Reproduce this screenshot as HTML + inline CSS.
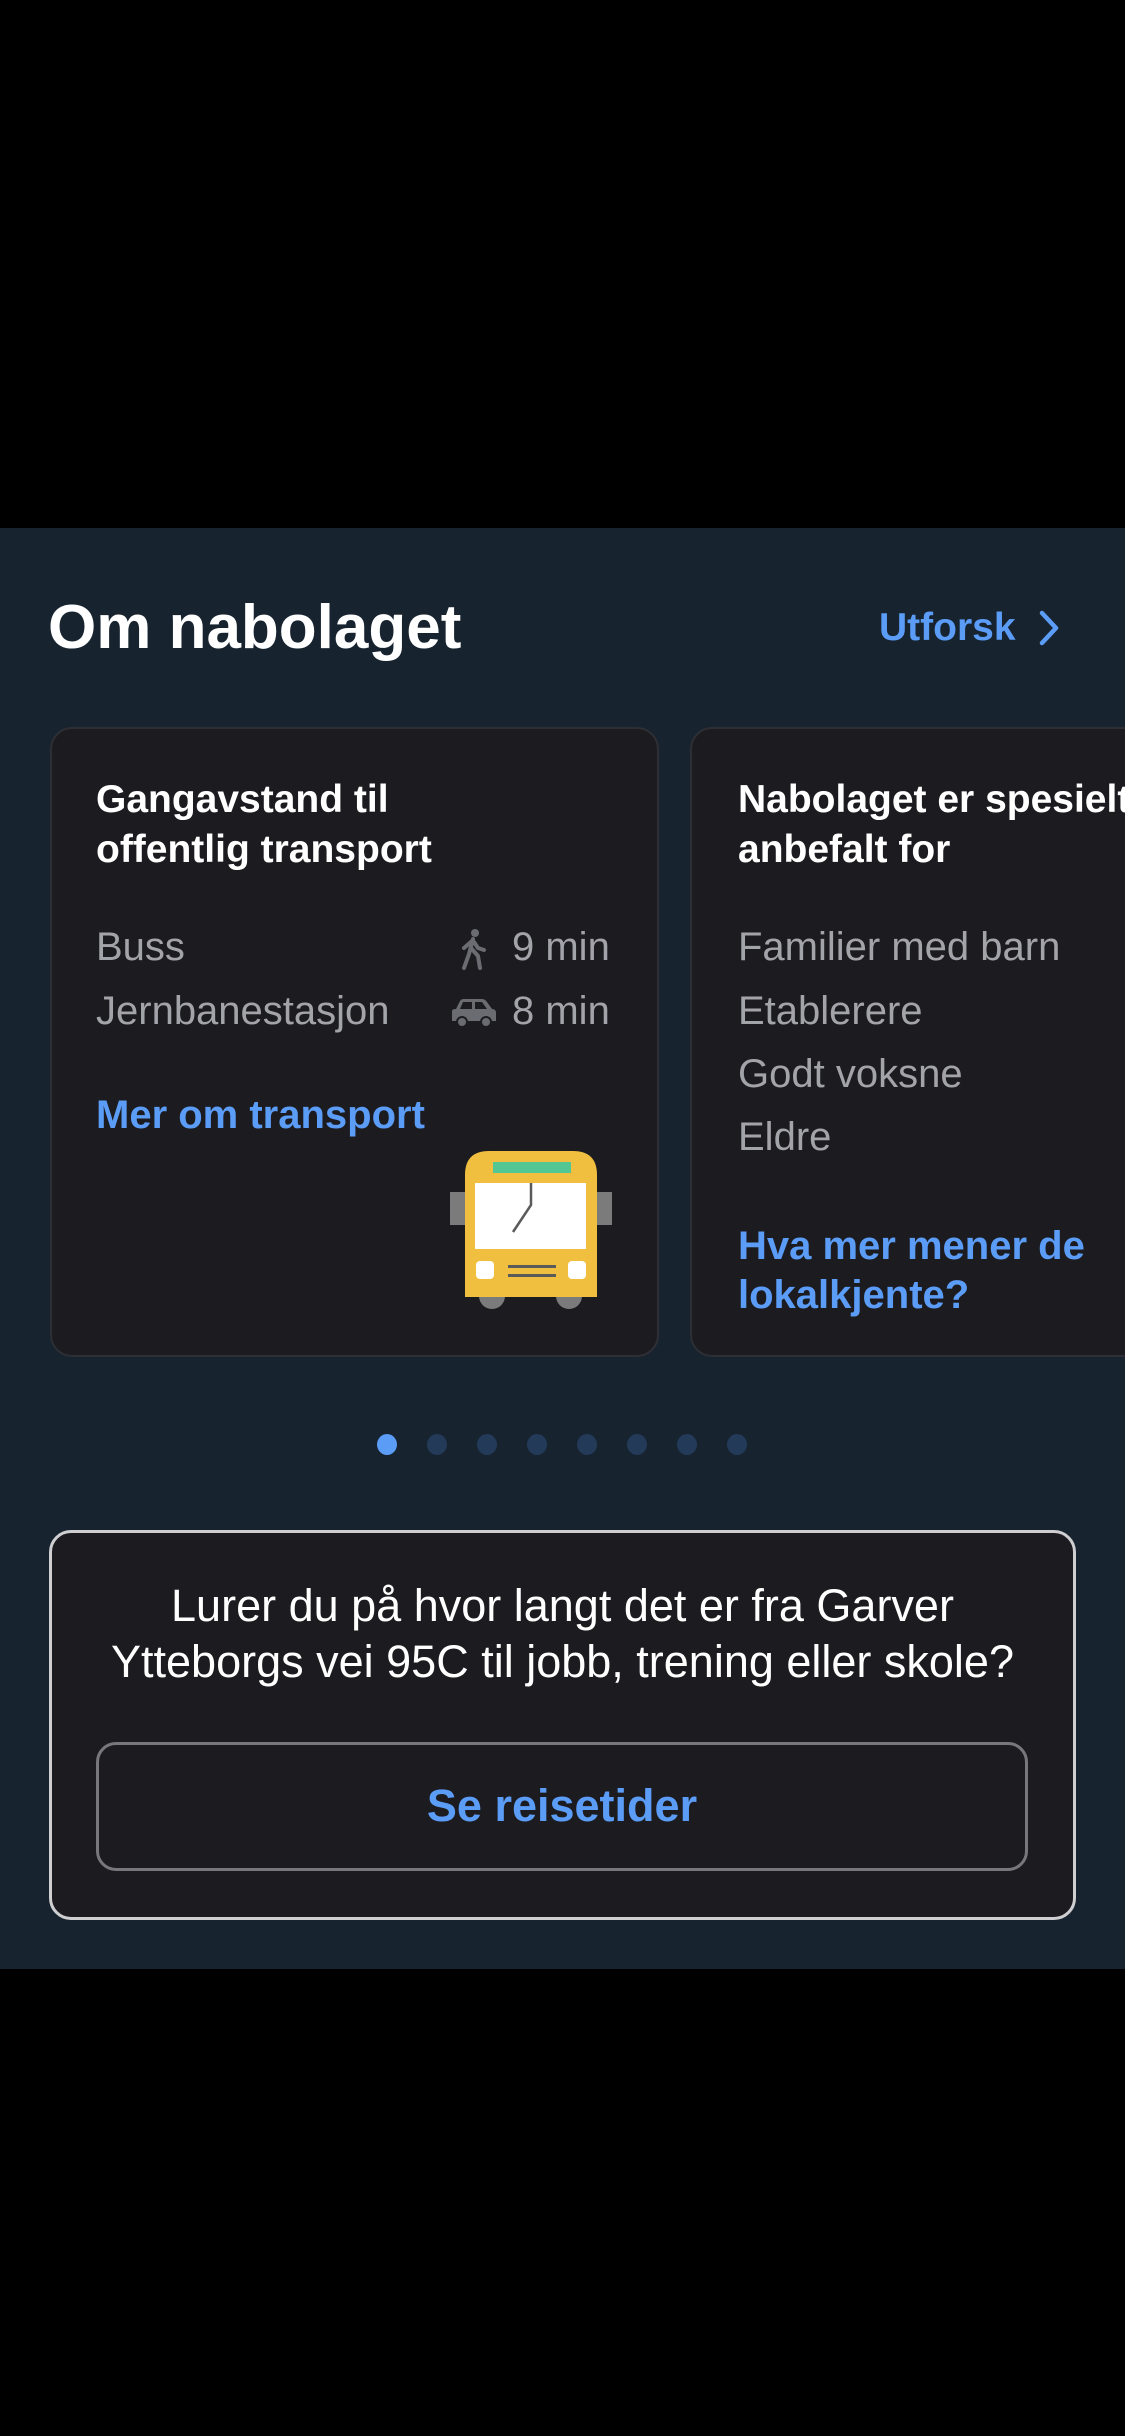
<!DOCTYPE html>
<html><head><meta charset="utf-8"><style>
*{margin:0;padding:0;box-sizing:border-box}
body{width:1125px;height:2436px;background:#000;font-family:"Liberation Sans",sans-serif;position:relative;overflow:hidden}
.sec{position:absolute;left:0;top:528px;width:1125px;height:1441px;background:#17232f}
.a{position:absolute;white-space:nowrap}
.card{position:absolute;top:727px;height:630px;background:#1c1c20;border:2px solid #2e2f34;border-radius:22px}
.t{color:#fff;font-weight:bold;font-size:39px;line-height:50px}
.g{color:#a3a3aa;font-size:40px}
.b{color:#5b9cf7;font-weight:bold}
.dot{position:absolute;top:1434px;width:20px;height:21px;border-radius:50%;background:#233a59}
</style></head><body>
<div class="sec"></div>
<div class="a" style="left:48px;top:592px;font-size:62px;font-weight:bold;color:#fff">Om nabolaget</div>
<div class="a b" style="left:879px;top:606px;font-size:39px">Utforsk</div>
<svg class="a" style="left:1036px;top:608px" width="26" height="40" viewBox="0 0 26 40"><path d="M6 5 L20 20 L6 35" fill="none" stroke="#5b9cf7" stroke-width="4.5" stroke-linecap="round" stroke-linejoin="round"/></svg>

<div class="card" style="left:50px;width:609px"></div>
<div class="a t" style="left:96px;top:775px">Gangavstand til<br>offentlig transport</div>
<div class="a g" style="left:96px;top:925px">Buss</div>
<div class="a g" style="left:96px;top:989px">Jernbanestasjon</div>
<div class="a g" style="left:512px;top:925px">9 min</div>
<div class="a g" style="left:512px;top:989px">8 min</div>
<svg class="a" style="left:458px;top:928px" width="30" height="42" viewBox="0 0 30 42"><circle cx="17" cy="5" r="4" fill="#6b6b72"/><path d="M15 11 L11 26 L6 40 M13 20 L20 28 L22 40 M14 13 L6 20 M16 14 L20 20 L26 22" fill="none" stroke="#6b6b72" stroke-width="4" stroke-linecap="round" stroke-linejoin="round"/></svg>
<svg class="a" style="left:450px;top:997px" width="48" height="32" viewBox="0 0 48 32"><path d="M2 14 Q2 12 6 12 L10 4 Q11 2 14 2 L32 2 Q35 2 37 5 L42 12 Q46 12 46 16 L46 24 L2 24 Z" fill="#6b6b72"/><path d="M13 5 L22 5 L22 12 L10 12 Z M25 5 L32 5 L37 12 L25 12 Z" fill="#1c1c20"/><circle cx="12" cy="25" r="5" fill="#6b6b72" stroke="#1c1c20" stroke-width="2"/><circle cx="36" cy="25" r="5" fill="#6b6b72" stroke="#1c1c20" stroke-width="2"/></svg>
<div class="a b" style="left:96px;top:1093px;font-size:40px">Mer om transport</div>
<svg class="a" style="left:450px;top:1150px" width="163" height="160" viewBox="450 1150 163 160">
<rect x="450" y="1192" width="16" height="33" fill="#7b7b7b"/><rect x="597" y="1192" width="15" height="33" fill="#7b7b7b"/>
<circle cx="492" cy="1296" r="13" fill="#7b7b7b"/><circle cx="569" cy="1296" r="13" fill="#7b7b7b"/>
<path d="M465 1297 L465 1175 Q465 1151 489 1151 L573 1151 Q597 1151 597 1175 L597 1297 Z" fill="#f1bf3f"/>
<rect x="493" y="1162" width="78" height="11" fill="#52c693"/>
<rect x="475" y="1183" width="111" height="66" fill="#fff"/>
<path d="M531 1183 L531 1205 L513 1232" fill="none" stroke="#5a5a5a" stroke-width="2.5"/>
<rect x="476" y="1261" width="18" height="18" rx="4" fill="#fff"/><rect x="568" y="1261" width="18" height="18" rx="4" fill="#fff"/>
<rect x="508" y="1265" width="48" height="3" fill="#5a5a5a"/><rect x="508" y="1274" width="48" height="3" fill="#5a5a5a"/>
</svg>

<div class="card" style="left:690px;width:600px"></div>
<div class="a t" style="left:738px;top:775px">Nabolaget er spesielt<br>anbefalt for</div>
<div class="a g" style="left:738px;top:925px">Familier med barn</div>
<div class="a g" style="left:738px;top:989px">Etablerere</div>
<div class="a g" style="left:738px;top:1052px">Godt voksne</div>
<div class="a g" style="left:738px;top:1115px">Eldre</div>
<div class="a b" style="left:738px;top:1222px;font-size:40px;line-height:49px">Hva mer mener de<br>lokalkjente?</div>

<div class="dot" style="left:377px;background:#5b9cf7"></div>
<div class="dot" style="left:427px"></div><div class="dot" style="left:477px"></div><div class="dot" style="left:527px"></div>
<div class="dot" style="left:577px"></div><div class="dot" style="left:627px"></div><div class="dot" style="left:677px"></div><div class="dot" style="left:727px"></div>

<div class="a" style="left:49px;top:1530px;width:1027px;height:390px;background:#1c1c20;border:3px solid #cfcfd2;border-radius:22px"></div>
<div class="a" style="left:49px;top:1578px;width:1027px;text-align:center;color:#fff;font-size:45px;line-height:56px">Lurer du på hvor langt det er fra Garver<br>Ytteborgs vei 95C til jobb, trening eller skole?</div>
<div class="a" style="left:96px;top:1742px;width:932px;height:129px;border:3px solid #78787c;border-radius:20px"></div>
<div class="a b" style="left:96px;top:1780px;width:932px;text-align:center;font-size:45px">Se reisetider</div>
</body></html>
